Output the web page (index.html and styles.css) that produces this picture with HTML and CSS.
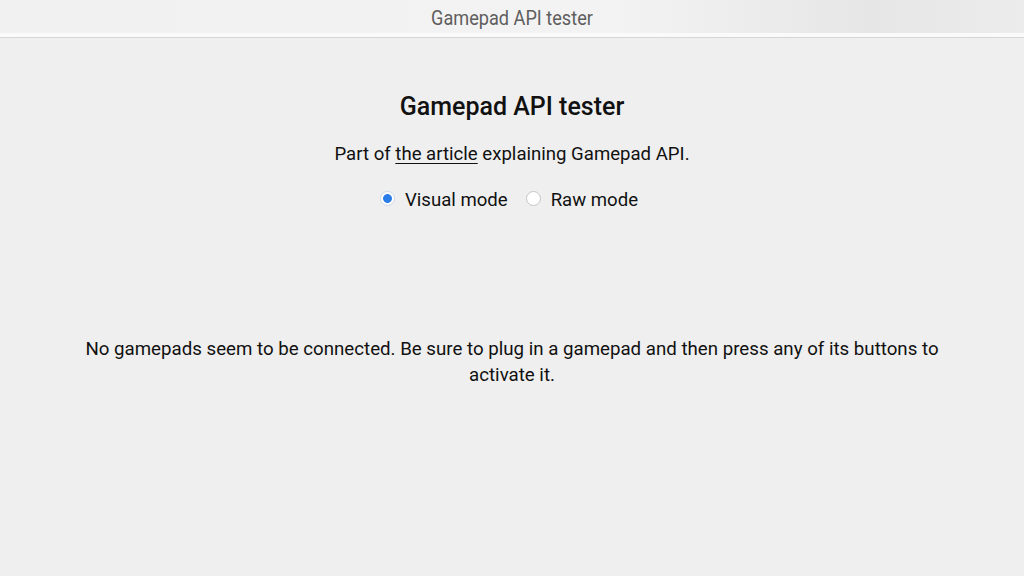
FILE: index.html
```html
<!DOCTYPE html>
<html>
<head>
<meta charset="utf-8">
<link rel="stylesheet" href="styles.css">
</head>
<body>
<header class="titlebar"><span class="titlebar-text">Gamepad API tester</span></header>
<main class="content">
  <h1 class="heading">Gamepad API tester</h1>
  <p class="intro">Part of <a class="link" href="#">the article</a> explaining Gamepad API.</p>
  <div class="modes">
    <label class="mode"><span class="radio checked"></span>Visual mode</label>
    <label class="mode"><span class="radio"></span>Raw mode</label>
  </div>
  <p class="notice">No gamepads seem to be connected. Be sure to plug in a gamepad and then press any of its buttons to activate it.</p>
</main>
</body>
</html>
```
FILE: styles.css
```css
html, body {
  margin: 0;
  padding: 0;
  height: 100%;
}
body {
  background: #efefef;
  font-family: Roboto, "Noto Sans", sans-serif;
  color: #111;
  overflow: hidden;
}
.titlebar {
  height: 37px;
  display: flex;
  align-items: center;
  justify-content: center;
  background: linear-gradient(90deg, #f1f1f1 0%, #f3f3f3 60%, #e6e6e6 85%, #ececec 100%);
  border-bottom: 1px solid #d6d6d6;
  box-shadow: inset 0 -4px 0 #fafafa;
}
.titlebar-text {
  font-family: Roboto, sans-serif;
  font-size: 19.5px;
  color: #5e5e5e;
  transform: scaleX(0.93);
  margin-top: -1px;
}
.content {
  text-align: center;
  padding: 0 60px;
}
.heading {
  font-size: 25px;
  font-weight: 500;
  margin: 53px 0 0;
  line-height: 32px;
}
.intro {
  font-size: 18.6px;
  margin: 19px 0 0;
  line-height: 24px;
}
.link {
  color: #111;
  text-decoration: underline;
  text-underline-offset: 3px;
}
.modes {
  display: flex;
  justify-content: center;
  gap: 18px;
  margin-top: 22px;
  padding-right: 6px;
  font-size: 18.6px;
  line-height: 24px;
}
.mode {
  display: flex;
  align-items: center;
  gap: 10px;
}
.radio {
  width: 15px;
  height: 15px;
  border-radius: 50%;
  border: 1.5px solid #c4c4c4;
  background: #fff;
  box-sizing: border-box;
  margin-top: -3px;
}
.radio.checked {
  border-color: #cfd8e4;
  background: radial-gradient(circle, #2a7de9 0 4px, #fff 4.8px);
}
.notice {
  font-size: 18.7px;
  line-height: 26px;
  margin: 124px 0 0;
}
```
